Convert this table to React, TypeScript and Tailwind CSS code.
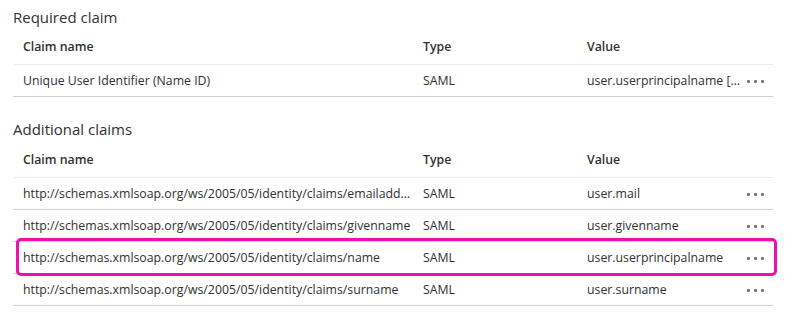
import React from "react";

const font = { fontFamily: '"Open Sans", "Noto Sans", "Liberation Sans", sans-serif' };

function Dots() {
  return (
    <div className="flex items-center gap-[4px]">
      <span className="block w-[3px] h-[3px] rounded-[1px] bg-[#797775]" />
      <span className="block w-[3px] h-[3px] rounded-[1px] bg-[#797775]" />
      <span className="block w-[3px] h-[3px] rounded-[1px] bg-[#797775]" />
    </div>
  );
}

type Row = { name: string; type: string; value: string };

function Table({ rows, highlight }: { rows: Row[]; highlight?: number }) {
  return (
    <div className="w-[760px] text-[12.3px] text-[#323130]">
      <div className="grid grid-cols-[400px_164px_164px_32px] h-[31px] pb-[4px] items-center border-b border-[#edebe9] font-semibold">
        <div className="pl-[10px]">Claim name</div>
        <div className="pl-[10px]">Type</div>
        <div className="pl-[10px]">Value</div>
        <div />
      </div>
      {rows.map((r, i) => (
        <div key={i} className="relative grid grid-cols-[400px_164px_164px_32px] h-[32px] pt-[1px] items-center border-b border-[#d2d0ce]">
          <div className="pl-[10px] pr-[2px] truncate">{r.name}</div>
          <div className="pl-[10px] truncate">{r.type}</div>
          <div className="pl-[10px] truncate">{r.value}</div>
          <div className="flex justify-start pl-[6px]">
            <Dots />
          </div>
          {highlight === i && (
            <div className="absolute left-[3px] right-[-4px] top-[-4px] bottom-[-3px] border-[3px] border-[#f00fac] rounded-[5px] pointer-events-none" />
          )}
        </div>
      ))}
    </div>
  );
}

export default function App() {
  return (
    <div className="w-[792px] h-[320px] bg-white pl-[13px]" style={font}>
      <div className="text-[15px] text-[#323130] h-[34px] flex items-center">Required claim</div>
      <Table rows={[{ name: "Unique User Identifier (Name ID)", type: "SAML", value: "user.userprincipalname [nameid-format:emailAddress]" }]} />
      <div className="text-[15px] text-[#323130] h-[36px] mt-[14px] flex items-center">Additional claims</div>
      <Table
        highlight={2}
        rows={[
          { name: "http://schemas.xmlsoap.org/ws/2005/05/identity/claims/emailaddress", type: "SAML", value: "user.mail" },
          { name: "http://schemas.xmlsoap.org/ws/2005/05/identity/claims/givenname", type: "SAML", value: "user.givenname" },
          { name: "http://schemas.xmlsoap.org/ws/2005/05/identity/claims/name", type: "SAML", value: "user.userprincipalname" },
          { name: "http://schemas.xmlsoap.org/ws/2005/05/identity/claims/surname", type: "SAML", value: "user.surname" },
        ]}
      />
    </div>
  );
}
